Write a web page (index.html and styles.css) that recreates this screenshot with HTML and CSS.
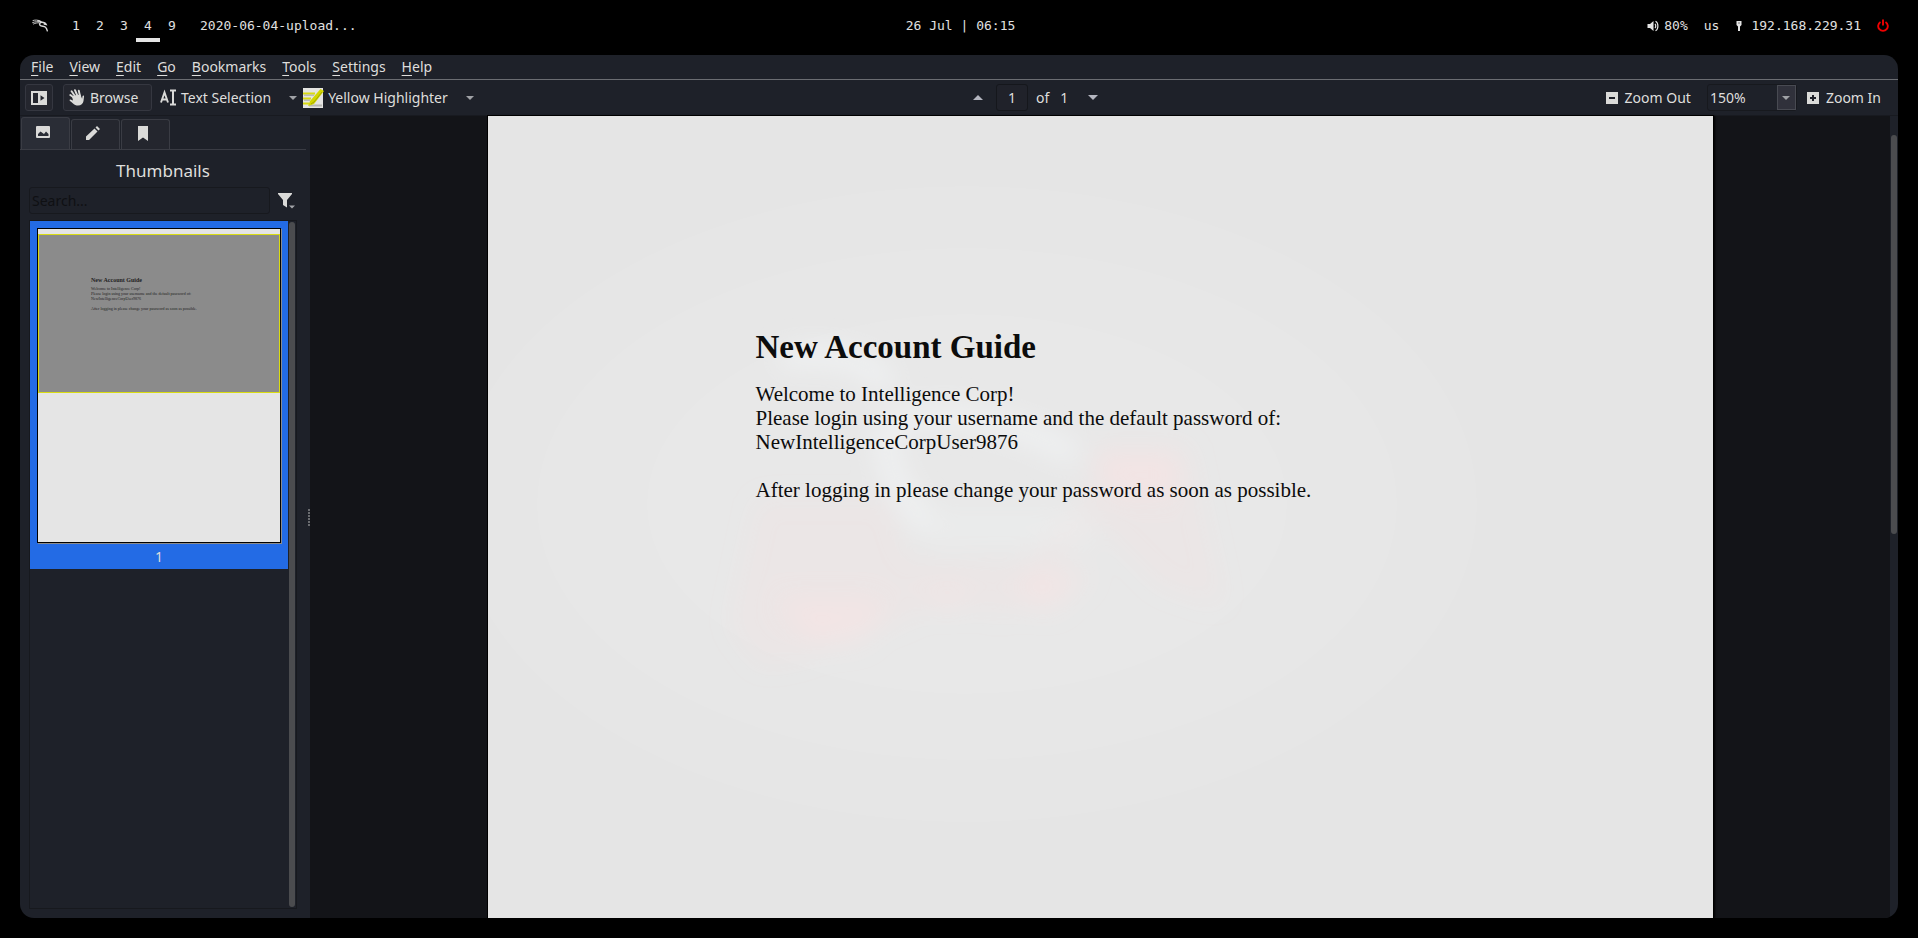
FILE: index.html
```html
<!DOCTYPE html>
<html lang="en">
<head>
<meta charset="utf-8">
<title>New Account Guide</title>
<meta name="viewport" content="width=device-width, initial-scale=1">
<link rel="stylesheet" href="styles.css">
</head>
<body>
<header class="panel">
  <div class="panel-side">
    <svg class="dragon" viewBox="0 0 17 13" width="17" height="13" aria-hidden="true"><g fill="none" stroke="#d8d8d8" stroke-linecap="round"><path d="M1 1.500C3 .8 6 .8 8 2M.6 3.600C3 2.600 6 2.300 9 3M1.500 5C3.500 4 5 3.800 7 3.800" stroke-width=".9"/><path d="M6 1.800C8 2.200 9 2.500 10 3.300c1.500 0 3.500.6 4.200 2.200l-2-.5M9.500 3.300C8 3.600 7 5 8 6.200c1.200 1.400 4 .8 5.500 2 1.200 1 1.400 2 1.800 3.600" stroke-width="1.400"/></g></svg>
    <nav class="spaces" aria-label="Workspaces">
      <button class="space">1</button><button class="space">2</button><button class="space">3</button><button class="space active">4</button><button class="space">9</button>
    </nav>
    <span class="task">2020-06-04-upload...</span>
  </div>
  <time class="clock">26 Jul | 06:15</time>
  <div class="panel-side tray">
    <span class="tray-item volume"><svg viewBox="0 0 12 12" width="12" height="12" aria-hidden="true"><path d="M.5 4H3l3.500-3v10L3 8H.5z" fill="#e4e4e4"/><path d="M8 3.800c1 1 1 3.400 0 4.400M8.500 1.300c3.200 1.500 3.200 7.900 0 9.400" fill="none" stroke="#e4e4e4" stroke-width="1.200"/></svg>80%</span>
    <span class="tray-item">us</span>
    <span class="tray-item net"><svg viewBox="0 0 8 12" width="8" height="12" aria-hidden="true"><path d="M1.500 1h5v4L5 6.500V11H3V6.500L1.500 5z" fill="#e4e4e4"/><path d="M3.500 3h1" stroke="#000"/></svg>192.168.229.31</span>
    <button class="power" aria-label="Power"><svg viewBox="0 0 12 13" width="12" height="13" aria-hidden="true"><path d="M3.500 3A4.800 4.800 0 1 0 8.500 3M6 .5v6" fill="none" stroke="#f00000" stroke-width="1.900"/></svg></button>
  </div>
</header>

<main class="window">
  <nav class="menubar" aria-label="Menu">
    <button><u>F</u>ile</button><button><u>V</u>iew</button><button><u>E</u>dit</button><button><u>G</u>o</button><button><u>B</u>ookmarks</button><button><u>T</u>ools</button><button><u>S</u>ettings</button><button><u>H</u>elp</button>
  </nav>

  <div class="toolbar">
    <div class="tools">
      <button class="tool framed panel-toggle" aria-label="Toggle sidebar"><svg viewBox="0 0 16 14" width="16" height="14" aria-hidden="true"><path fill="#dadad8" fill-rule="evenodd" d="M0 0h16v14H0zM2 2v10h5V2zM9.500 4.200v5.600L13.500 7z"/></svg></button>
      <button class="tool framed browse"><svg viewBox="0 0 16 17" width="16" height="17" aria-hidden="true"><path d="M5.500 9 1.300 6M6.500 8 2.600 2.300M8.500 7 6 1.200M11 7 9.800 1.800" stroke="#dadad8" stroke-width="1.900" stroke-linecap="round"/><path fill="#dadad8" d="m3 7.500 3-1 5.300-1 1.800 4.200.4-2.500c.3-1.200 1.800-.8 1.500.5L14.500 12c-.3 2.500-2.500 4.500-5.500 4.500-3.500 0-4-1.500-8-4.500-1-1 0-1.900 1-1.300L4 11.500z"/></svg>Browse</button>
      <button class="tool text-tool"><svg viewBox="0 0 16 17" width="16" height="17" aria-hidden="true"><path d="M1 13.500 4.500 3.500 8 13.500M2 10.500h5" fill="none" stroke="#dadad8" stroke-width="1.900"/><path d="M10 1.500h6M10 15.500h6M13 1.500v14" stroke="#dadad8" stroke-width="2"/></svg>Text Selection</button>
      <button class="drop" aria-label="Selection tools"><i class="down"></i></button>
      <button class="tool marker"><svg viewBox="0 0 21 20" width="21" height="20" aria-hidden="true"><path fill="#e4e4e2" d="M0 0h20v20H0z"/><path d="M0 5.500h12M0 10.500h8M0 15.500h6" stroke="#d8da12" stroke-width="2"/><path d="M1 7.200h10M1 12.200h6" stroke="#9a9a98" stroke-width=".8"/><path d="M6 17.500h13" stroke="#b4b4b0" stroke-width="1.800"/><path d="M5 18 7 13 17.500 1 21 3 11 16z" fill="#d2d600"/><path d="m8 16 3-2 8-10" fill="none" stroke="#a4a800"/></svg>Yellow Highlighter</button>
      <button class="drop" aria-label="Annotation tools"><i class="down"></i></button>
    </div>
    <div class="pager">
      <button class="drop" aria-label="Previous page"><i class="up"></i></button>
      <input class="page-no" aria-label="Page" value="1">
      <span class="of">of</span><span class="total">1</span>
      <button class="drop" aria-label="Next page"><i class="down light"></i></button>
    </div>
    <div class="zoom">
      <button class="tool"><svg viewBox="0 0 12 12" width="12" height="12" aria-hidden="true"><path fill="#dadad8" d="M0 0h12v12H0z"/><path d="M3 6h6" stroke="#1e2028" stroke-width="2"/></svg>Zoom Out</button>
      <div class="zoom-level"><input aria-label="Zoom" value="150%"><button aria-label="Zoom levels"><i class="down"></i></button></div>
      <button class="tool"><svg viewBox="0 0 12 12" width="12" height="12" aria-hidden="true"><path fill="#dadad8" d="M0 0h12v12H0z"/><path d="M3 6h6M6 3v6" stroke="#1e2028" stroke-width="2"/></svg>Zoom In</button>
    </div>
  </div>

  <div class="content">
    <aside class="sidebar">
      <div class="tabs">
        <button class="tab current" aria-label="Thumbnails"><svg viewBox="0 0 14 12" width="14" height="12" aria-hidden="true"><path fill="#dadad8" fill-rule="evenodd" d="M1 0h12q1 0 1 1v10q0 1-1 1H1q-1 0-1-1V1q0-1 1-1zM2 10h10.500V8L10 5.500 8 8 4.500 5.500 2 8z"/></svg></button>
        <button class="tab" aria-label="Annotations"><svg viewBox="0 0 14 14" width="14" height="14" aria-hidden="true"><path fill="#dadad8" d="M0 14v-3.500l8.500-8 3 3L3 14zM9.500 1.500 11 0l3 3-1.500 1.500z"/></svg></button>
        <button class="tab" aria-label="Bookmarks"><svg viewBox="0 0 10 15" width="10" height="15" aria-hidden="true"><path fill="#dadad8" d="M0 0h10v15l-5-3.500L0 15z"/></svg></button>
      </div>
      <h2 class="side-title">Thumbnails</h2>
      <div class="search">
        <input type="text" placeholder="Search..." aria-label="Search">
        <button aria-label="Filter"><svg viewBox="0 0 17 16" width="17" height="16" aria-hidden="true"><path fill="#dadad8" d="M0 0h14v1L9 7v7.500L5 12V7L0 1z"/><path fill="#a4a6aa" d="M11 12.500h6l-3 3z"/></svg></button>
      </div>
      <div class="thumbs">
        <div class="thumb-list">
          <figure class="thumb">
            <div class="thumb-page">
              <div class="viewport-mark">
                <strong>New Account Guide</strong>
                <p>Welcome to Intelligence Corp!<br>Please login using your username and the default password of:<br>NewIntelligenceCorpUser9876<br><br>After logging in please change your password as soon as possible.</p>
              </div>
            </div>
            <figcaption>1</figcaption>
          </figure>
        </div>
        <div class="thumb-scroll"></div>
      </div>
    </aside>
    <div class="grip"></div>
    <section class="viewer">
      <article class="page">
        <svg class="watermark" viewBox="487 116 1225 802" preserveAspectRatio="none" aria-hidden="true">
          <defs><filter id="soft" x="-30%" y="-30%" width="160%" height="160%"><feGaussianBlur stdDeviation="13"/></filter></defs>
          <g fill="#fff" fill-opacity=".05"><ellipse cx="966" cy="504" rx="510" ry="318"/><ellipse cx="966" cy="504" rx="430" ry="256"/><ellipse cx="966" cy="504" rx="320" ry="190"/></g>
          <g filter="url(#soft)">
            <path fill="#ffd8d4" fill-opacity=".15" d="M758 500h128l20 60 120 5 60-70 10-50h90l35 160-60-20-70-70-50 70-40 30-50-20-60 30-60-10-20 40-50 10-30-40z"/>
            <path fill="#ffe2e0" fill-opacity=".4" d="M775 600h95l15 12-25 30-45 4zM1025 572h65l-40 38-32-8zM1090 455h85v40h-60zM925 590h40v16h-30z"/>
            <path fill="none" stroke="#f8fbfd" stroke-opacity=".55" stroke-width="18" d="M780 358q90-10 106 30M925 525q-55-70-35-100 70-30 185 30"/>
            <path fill="#f4f8fa" fill-opacity=".2" d="M900 510h190v34H930z"/>
          </g>
        </svg>
        <h1>New Account Guide</h1>
        <p>Welcome to Intelligence Corp!<br>Please login using your username and the default password of:<br>NewIntelligenceCorpUser9876</p>
        <p>After logging in please change your password as soon as possible.</p>
      </article>
    </section>
    <div class="view-scroll"><div class="view-thumb"></div></div>
  </div>
</main>
</body>
</html>
```

FILE: styles.css
```css
* { box-sizing: border-box; }

body {
  margin: 0;
  height: 100vh;
  display: flex;
  flex-direction: column;
  background: #000;
  color: #dededc;
  font: 14px/20px "Noto Sans", sans-serif;
  overflow: hidden;
}

button, input { font: inherit; color: inherit; background: none; border: 0; padding: 0; margin: 0; }
input { min-width: 0; }
svg { display: block; flex: none; }

/* Desktop panel */
.panel {
  flex: none;
  height: 55px;
  padding: 0 29px 4px 32px;
  display: flex;
  align-items: center;
  font: 13px/16px "DejaVu Sans Mono", monospace;
  color: #e0e0e0;
}
.panel-side { flex: 1; display: flex; align-items: center; }
.spaces { display: flex; margin-left: 15px; }
.space { width: 24px; height: 32px; border-bottom: 4px solid transparent; border-top: 4px solid transparent; }
.space.active { border-bottom-color: #e4e4e4; }
.task { margin-left: 16px; }
.tray { justify-content: flex-end; gap: 16px; }
.tray-item { display: flex; align-items: center; gap: 5px; }
.net { gap: 8px; }
.power { display: block; }

/* Window */
.window {
  flex: 1;
  min-height: 0;
  margin: 0 20px 20px;
  border-radius: 14px;
  overflow: hidden;
  display: flex;
  flex-direction: column;
  background: #1e2129;
}
.menubar {
  flex: none;
  display: flex;
  gap: 16px;
  height: 25px;
  padding: 0 11px 1px;
  border-bottom: 1px solid #6b6d72;
}
.menubar u { text-underline-offset: 3px; text-decoration-thickness: 1px; }

.toolbar {
  flex: none;
  height: 36px;
  padding: 0 17px 0 5px;
  border-bottom: 1px solid #181a20;
  display: flex;
  align-items: center;
  justify-content: space-between;
}
.tools, .zoom { display: flex; align-items: center; }
.tool { display: flex; align-items: center; gap: 7px; height: 27px; white-space: nowrap; }
.framed { border: 1px solid #353740; border-radius: 3px; background: #24262e; }
.panel-toggle { width: 28px; justify-content: center; margin-right: 10px; }
.browse { width: 89px; gap: 5px; padding-left: 5px; margin-right: 8px; }
.text-tool { gap: 5px; }
.marker { gap: 4px; }
.drop { width: 30px; height: 27px; display: flex; align-items: center; justify-content: center; }
.tools .drop { width: 32px; justify-content: flex-end; padding-right: 6px; }
.down, .up { border: 4px solid transparent; }
.down { border-top-color: #a0a2a6; border-bottom: 0; }
.down.light { border-width: 5px 5px 0; border-top-color: #b4b6c0; }
.up { border-width: 0 5px 5px; border-bottom-color: #b4b6c0; }

.pager { display: flex; align-items: center; margin-right: 14px; }
.page-no {
  width: 32px;
  height: 27px;
  margin: 0 8px 0 3px;
  text-align: center;
  border: 1px solid #15171c;
  border-radius: 3px;
  background: #20222a;
}
.of { margin-right: 11px; }
.total { margin-right: 10px; }

.zoom-level {
  display: flex;
  width: 90px;
  height: 27px;
  margin: 0 10px 0 16px;
  border: 1px solid #17191e;
  border-radius: 3px;
}
.zoom-level input { flex: 1; padding-left: 2px; }
.zoom-level button {
  width: 19px;
  display: flex;
  align-items: center;
  justify-content: center;
  background: #30313b;
  border: 1px solid #484a52;
}

.content { flex: 1; min-height: 0; display: flex; }

/* Sidebar */
.sidebar {
  width: 286px;
  flex: none;
  display: flex;
  flex-direction: column;
  padding-bottom: 9px;
}
.tabs {
  flex: none;
  display: flex;
  align-items: flex-end;
  gap: 1px;
  height: 34px;
  padding: 1px 1px 0;
  border-bottom: 1px solid #3a3c44;
}
.tab {
  width: 49px;
  height: 30px;
  display: flex;
  align-items: center;
  justify-content: center;
  padding: 0 6px 3px 0;
  border: 1px solid #3a3c44;
  border-bottom: 0;
  border-radius: 3px 3px 0 0;
  background: #24262e;
}
.tab.current { height: 32px; background: #2a2d36; }
.side-title { margin: 8px 0 4px; text-align: center; font: 17px/25px "Noto Sans", sans-serif; }
.search { flex: none; display: flex; align-items: center; padding: 0 11px 0 9px; }
.search input {
  flex: 1;
  height: 27px;
  padding: 0 2px;
  margin-right: 8px;
  border: 1px solid #17191e;
  border-radius: 3px;
}
.search input::placeholder { color: #0f1013; opacity: 1; }
.thumbs {
  flex: 1;
  min-height: 0;
  display: flex;
  margin: 6px 9px 0;
  border: 1px solid #17191e;
}
.thumb-list { flex: 1; }
.thumb-scroll { width: 6px; margin: 1px; border-radius: 3px; background: #4b4c4f; }
.thumb { margin: 0; padding: 7px 7px 1px; background: #236be5; }
.thumb-page {
  height: 315px;
  padding-top: 5px;
  border: 1px solid #000;
  background: #e5e5e5;
  box-shadow: 1px 1px 0 #8b8b8b;
}
.viewport-mark {
  height: 159px;
  padding: 41px 0 0 52px;
  border: 1px solid #d9dc12;
  background: #8b8b8b;
  color: #222;
  font: 4px/5px "Liberation Serif", serif;
  white-space: nowrap;
}
.viewport-mark strong { display: block; font-size: 6px; line-height: 8px; }
.viewport-mark p { margin: 2px 0 0; }
.thumb figcaption { padding-top: 4px; height: 25px; text-align: center; }

.grip {
  width: 4px;
  flex: none;
  display: flex;
  align-items: center;
}
.grip::after {
  content: "";
  width: 2px;
  height: 17px;
  margin-left: 2px;
  background: repeating-linear-gradient(#6a6c70 0 2px, transparent 2px 3px);
}

/* Document */
.viewer { flex: 1; min-width: 0; background: #131418; display: flex; justify-content: center; }
.page {
  position: relative;
  width: 78%;
  max-width: 1225px;
  padding: 212px 20px 0 268px;
  background: #e5e5e5;
  color: #0c0c0c;
  font: 21px/24px "Liberation Serif", serif;
  box-shadow: 0 0 0 1px #000, 2px 0 2px #000;
}
.watermark { position: absolute; inset: 0; width: 100%; height: 100%; }
.page h1, .page p { position: relative; }
.page h1 { margin: 0 0 16px; font-size: 33px; line-height: 38px; }
.page p { margin: 0 0 24px; }

.view-scroll { width: 8px; flex: none; padding: 19px 1px 0; }
.view-thumb { height: 51%; border-radius: 3px; background: #4b4c4f; }
```
